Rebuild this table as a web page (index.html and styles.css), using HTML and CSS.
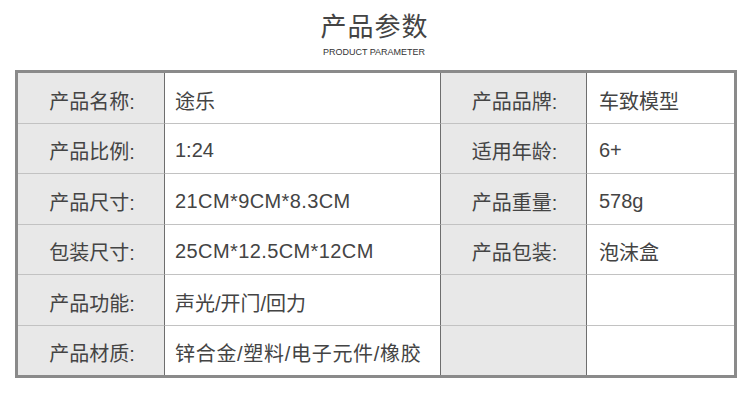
FILE: index.html
```html
<!DOCTYPE html>
<html lang="zh">
<head>
<meta charset="utf-8">
<link rel="stylesheet" href="styles.css">
</head>
<body>
<div class="page">
  <header class="head">
    <h1 class="title">产品参数</h1>
    <div class="subtitle">PRODUCT PARAMETER</div>
  </header>
  <div class="table">
    <div class="cell label">产品名称:</div>
    <div class="cell value">途乐</div>
    <div class="cell label">产品品牌:</div>
    <div class="cell value v4">车致模型</div>

    <div class="cell label">产品比例:</div>
    <div class="cell value">1:24</div>
    <div class="cell label">适用年龄:</div>
    <div class="cell value v4">6+</div>

    <div class="cell label">产品尺寸:</div>
    <div class="cell value dim">21CM*9CM*8.3CM</div>
    <div class="cell label">产品重量:</div>
    <div class="cell value v4">578g</div>

    <div class="cell label">包装尺寸:</div>
    <div class="cell value dim">25CM*12.5CM*12CM</div>
    <div class="cell label">产品包装:</div>
    <div class="cell value v4">泡沫盒</div>

    <div class="cell label">产品功能:</div>
    <div class="cell value">声光/开门/回力</div>
    <div class="cell label"></div>
    <div class="cell value v4"></div>

    <div class="cell label last">产品材质:</div>
    <div class="cell value last wide">锌合金/塑料/电子元件/橡胶</div>
    <div class="cell label last"></div>
    <div class="cell value v4 last"></div>
  </div>
</div>
</body>
</html>
```

FILE: styles.css
```css
* { box-sizing: border-box; }
html, body { margin: 0; padding: 0; background: #fff; }
body {
  font-family: "Liberation Sans", "Noto Sans CJK SC", sans-serif;
  color: #444;
  width: 750px;
  height: 402px;
  overflow: hidden;
}
.page {
  padding: 0 13px 0 15px;
}
.head {
  display: flex;
  flex-direction: column;
  align-items: center;
  height: 70px;
  padding-right: 4px;
}
.title {
  margin: 8px 0 0;
  font-family: "Noto Sans CJK SC", sans-serif;
  font-weight: 400;
  font-size: 26px;
  line-height: 34px;
  letter-spacing: 1px;
  padding-left: 1px;
  color: #444;
}
.subtitle {
  margin-top: 5px;
  font-family: "Liberation Sans", sans-serif;
  font-size: 9px;
  line-height: 11px;
  color: #333;
}
.table {
  border: 3px solid #8a8a8a;
  display: grid;
  grid-template-columns: 147px 276px 146px 147px;
  grid-template-rows: 51px 50px 51px 50px 51px 49px;
  width: 722px;
}
.cell {
  display: flex;
  align-items: center;
  font-size: 20px;
  padding-top: 4px;
  border-bottom: 1px solid #c2c2c2;
  border-right: 1px solid #6e6e6e;
  color: #444;
}
.cell.last { border-bottom: none; }
.cell.v4 { border-right: none; padding-left: 12px; }
.label {
  background: #e8e8e8;
  justify-content: center;
  padding-left: 2px;
}
.value {
  background: #fff;
  padding-left: 10px;
}
.dim { letter-spacing: 0.4px; }
.wide { letter-spacing: 0.7px; }
```
